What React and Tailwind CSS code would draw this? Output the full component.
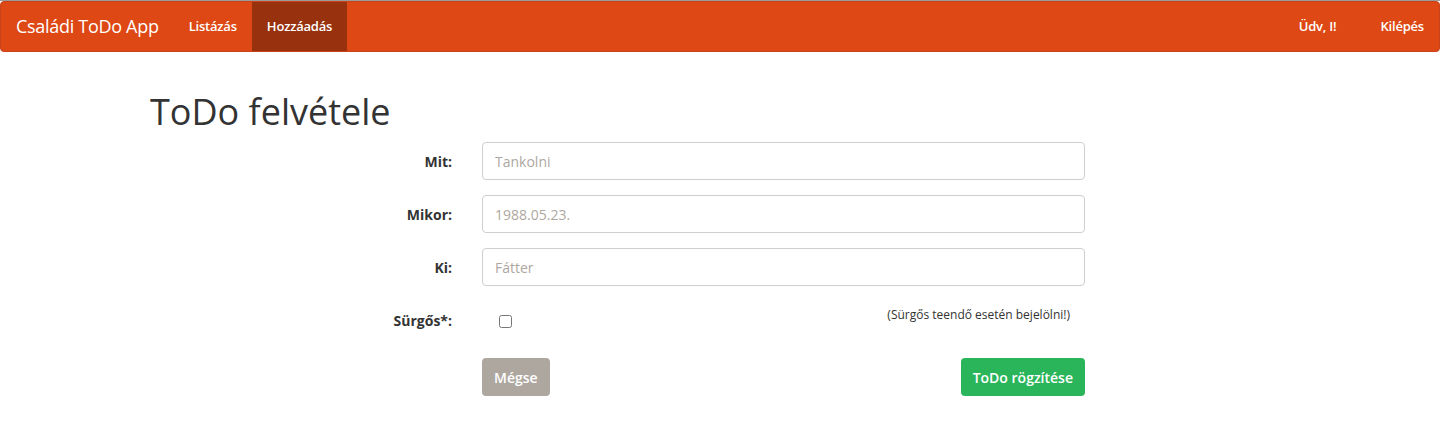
import { useState } from "react"

const font = { fontFamily: '"Open Sans", "Noto Sans", sans-serif' }

const Field = ({ label, placeholder }) => (
  <div className="flex items-center mb-[15px]">
    <label className="w-[302px] text-right font-bold text-[14px] text-[#333]">{label}</label>
    <input
      type="text"
      placeholder={placeholder}
      className="ml-[30px] w-[603px] h-[38px] px-[12px] text-[14px] text-[#333] border border-[#cfcfcf] rounded-[4px] placeholder:text-[#aea79f] outline-none"
    />
  </div>
)

export default function App() {
  const [urgent, setUrgent] = useState(false)

  return (
    <div className="min-h-screen bg-white border-t border-[#9b9b9b]" style={font}>
      <nav className="h-[51px] bg-[#dd4814] border border-[#c8421a] rounded-[4px] flex items-stretch justify-between text-white">
        <div className="flex items-stretch">
          <a className="flex items-center px-[15px] text-[18px] tracking-[-0.3px]">Családi ToDo App</a>
          <a className="flex items-center px-[15px] text-[13px] font-semibold tracking-[-0.2px]">Listázás</a>
          <a className="flex items-center px-[15px] text-[13px] font-semibold tracking-[-0.2px] bg-[#97310e]">Hozzáadás</a>
        </div>
        <div className="flex items-stretch">
          <span className="flex items-center text-[13px] font-semibold tracking-[-0.2px] mr-[29px]">Üdv, I!</span>
          <a className="flex items-center px-[15px] text-[13px] font-semibold tracking-[-0.2px]">Kilépés</a>
        </div>
      </nav>

      <div className="w-[1170px] mx-auto px-[15px]">
        <h1 className="mt-[40px] mb-[10px] text-[36px] leading-[40px] text-[#333]">ToDo felvétele</h1>

        <form>
          <Field label="Mit:" placeholder="Tankolni" />
          <Field label="Mikor:" placeholder="1988.05.23." />
          <Field label="Ki:" placeholder="Fátter" />

          <div className="flex items-start pt-[5px] mb-[27px]">
            <label className="w-[302px] text-right font-bold text-[14px] text-[#333] pt-[4px]">Sürgős*:</label>
            <div className="ml-[30px] w-[603px] flex justify-between pl-[17px] pr-[15px]">
              <input
                type="checkbox"
                checked={urgent}
                onChange={() => setUrgent(!urgent)}
                className="mt-[9px] w-[13px] h-[13px]"
              />
              <span className="text-[12px] text-[#333]">(Sürgős teendő esetén bejelölni!)</span>
            </div>
          </div>

          <div className="flex ml-[332px] w-[603px] justify-between">
            <button type="button" className="h-[38px] px-[12px] rounded-[4px] bg-[#aea79f] text-white text-[14px] font-semibold">
              Mégse
            </button>
            <button type="submit" className="h-[38px] px-[12px] rounded-[4px] bg-[#2bb55b] text-white text-[14px] font-semibold">
              ToDo rögzítése
            </button>
          </div>
        </form>
      </div>
    </div>
  )
}
